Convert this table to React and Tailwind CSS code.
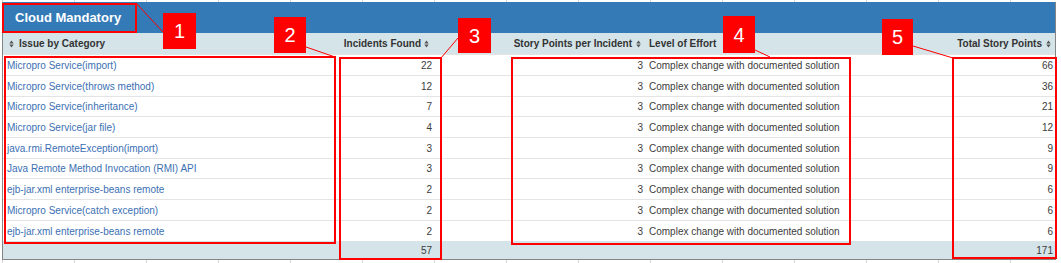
import React from 'react';

const rows = [
  { name: 'Micropro Service(import)', found: 22, total: 66, h: 'h-[21px]' },
  { name: 'Micropro Service(throws method)', found: 12, total: 36, h: 'h-[21px]' },
  { name: 'Micropro Service(inheritance)', found: 7, total: 21, h: 'h-[20px]' },
  { name: 'Micropro Service(jar file)', found: 4, total: 12, h: 'h-[21px]' },
  { name: 'java.rmi.RemoteException(import)', found: 3, total: 9, h: 'h-[21px]' },
  { name: 'Java Remote Method Invocation (RMI) API', found: 3, total: 9, h: 'h-[20px]' },
  { name: 'ejb-jar.xml enterprise-beans remote', found: 2, total: 6, h: 'h-[21px]' },
  { name: 'Micropro Service(catch exception)', found: 2, total: 6, h: 'h-[21px]' },
  { name: 'ejb-jar.xml enterprise-beans remote', found: 2, total: 6, h: 'h-[21px]' },
];

const cols = 'grid grid-cols-[334px_99px_209px_305px_105px]';

const SortIcon = () => (
  <svg width="5" height="8" viewBox="0 0 5 8" className="shrink-0">
    <path d="M0.3 3.4 L2.5 0.4 L4.7 3.4 Z M0.3 4.6 L2.5 7.6 L4.7 4.6 Z" fill="#555" />
  </svg>
);

// numbered red callouts drawn over the table
const Label = ({ n, className }) => (
  <div
    className={`absolute flex items-center justify-center bg-[#ff0000] text-white text-[20px] leading-none font-['Liberation_Sans',sans-serif] ${className}`}
  >
    {n}
  </div>
);

const App = () => {
  return (
    <div className="relative w-[1061px] h-[263px] overflow-hidden bg-white bg-[linear-gradient(to_right,#d6d6d6_1px,transparent_1px)] bg-[length:72px_100%] bg-[position:2px_0] font-['Liberation_Sans',Arial,sans-serif]">
      {/* Panel */}
      <div className="ml-[2px] mt-[2px] w-[1054px] bg-white border-l border-r border-b border-[#858585]">
        {/* Title bar */}
        <div className="h-[31px] bg-[#337ab7] flex items-center">
          <span className="pl-[12px] text-[13px] font-bold text-white">Cloud Mandatory</span>
        </div>

        {/* Column headers */}
        <div className={`${cols} h-[21px] bg-[#d5e4e9] text-[10px] font-bold text-[#333]`}>
          <div className="flex items-center gap-[5px] pl-[6px]">
            <SortIcon />
            <span>Issue by Category</span>
          </div>
          <div className="flex items-center justify-end gap-[3px] pr-[7px]">
            <span>Incidents Found</span>
            <SortIcon />
          </div>
          <div className="flex items-center justify-end gap-[4px] pr-[4px]">
            <span>Story Points per Incident</span>
            <SortIcon />
          </div>
          <div className="flex items-center pl-[4px]">
            <span>Level of Effort</span>
          </div>
          <div className="flex items-center justify-end gap-[4px] pr-[4px]">
            <span>Total Story Points</span>
            <SortIcon />
          </div>
        </div>

        {/* Rows */}
        {rows.map((r, i) => (
          <div key={i} className={`${cols} ${r.h} border-t border-[#e4e4e4] text-[10px] text-[#3c3c3c]`}>
            <div className="flex items-center pl-[4px] text-[#3b70b3]">{r.name}</div>
            <div className="flex items-center justify-end pr-[4px]">{r.found}</div>
            <div className="flex items-center justify-end pr-[2px]">3</div>
            <div className="flex items-center pl-[4px]">Complex change with documented solution</div>
            <div className="flex items-center justify-end pr-[2px]">{r.total}</div>
          </div>
        ))}

        {/* Totals */}
        <div className={`${cols} h-[18px] bg-[#d5e4e9] text-[10px] text-[#3c3c3c]`}>
          <div />
          <div className="flex items-center justify-end pr-[4px]">57</div>
          <div />
          <div />
          <div className="flex items-center justify-end pr-[2px]">171</div>
        </div>
      </div>

      {/* Callout boxes */}
      <div className="absolute left-[2px] top-[3px] w-[135px] h-[30px] border-2 border-[#ff0000]" />
      <div className="absolute left-[4px] top-[56px] w-[332px] h-[188px] border-2 border-[#ff0000]" />
      <div className="absolute left-[339px] top-[57px] w-[103px] h-[203px] border-2 border-[#ff0000]" />
      <div className="absolute left-[511px] top-[57px] w-[340px] h-[188px] border-2 border-[#ff0000]" />
      <div className="absolute left-[952px] top-[57px] w-[105px] h-[202px] border-2 border-[#ff0000]" />

      {/* Connector lines */}
      <svg className="absolute inset-0 pointer-events-none" width="1061" height="263">
        <g stroke="#ff0000" strokeWidth="1">
          <line x1="137" y1="4" x2="163" y2="32" />
          <line x1="306" y1="47" x2="335" y2="57" />
          <line x1="458" y1="38" x2="441" y2="58" />
          <line x1="755" y1="50" x2="770" y2="57" />
          <line x1="913" y1="46" x2="953" y2="58" />
        </g>
      </svg>

      <Label n="1" className="left-[163px] top-[13px] w-[33px] h-[36px]" />
      <Label n="2" className="left-[274px] top-[17px] w-[32px] h-[36px]" />
      <Label n="3" className="left-[458px] top-[18px] w-[33px] h-[35px]" />
      <Label n="4" className="left-[723px] top-[16px] w-[32px] h-[37px]" />
      <Label n="5" className="left-[882px] top-[19px] w-[31px] h-[36px]" />
    </div>
  );
};

export default App;
